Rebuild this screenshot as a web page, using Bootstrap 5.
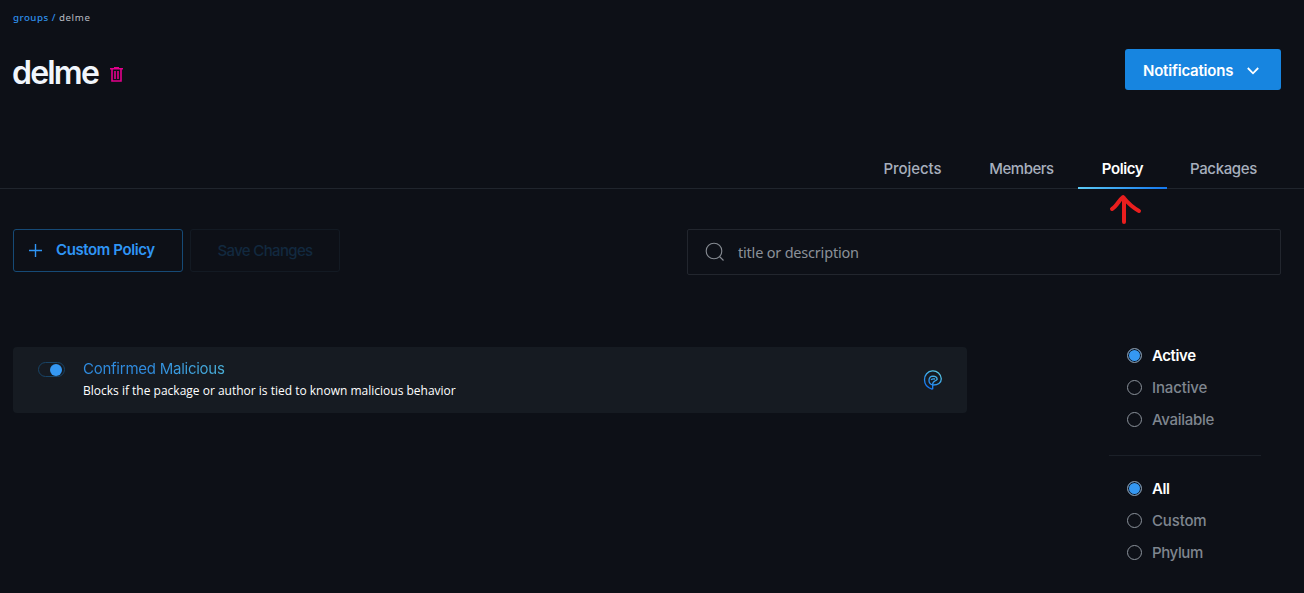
<!DOCTYPE html>
<html lang="en" data-bs-theme="dark">
<head>
<meta charset="utf-8">
<meta name="viewport" content="width=device-width, initial-scale=1">
<title>delme – Policy</title>
<link href="https://cdn.jsdelivr.net/npm/bootstrap@5.3.0/dist/css/bootstrap.min.css" rel="stylesheet">
<style>
:root{--ui:Inter,"Liberation Sans",sans-serif;--copy:"Noto Sans","Open Sans",sans-serif}
body{background:#0d1017;font-family:var(--ui);font-size:15px;line-height:20px;color:#fff;height:593px;overflow:hidden}
.crumbs{font:400 9.7px/14px var(--copy);padding:11px 0 0 13px;height:25px;letter-spacing:.6px;color:#b8bcc2}
.crumbs a{color:#2f8fea;font-weight:500;letter-spacing:.5px}
.title-row{height:90px;padding:24px 23px 0 12px}
h1{font-size:32px;line-height:48px;font-weight:600;letter-spacing:-1.8px;width:98px;color:#f1f6fc}
.btn-notify{--bs-btn-bg:#1785e0;--bs-btn-border-width:0;width:156px;height:41px;border-radius:3px;padding:2px 22px 0 18px;font-size:15px;font-weight:600;letter-spacing:-.2px}
.btn-notify span{padding-top:1px}
.tabs{height:74px;border-bottom:1px solid #20252d;padding:34px 24px 0 0}
.tabs a{height:40px;padding:10px 0;color:#a7afbd;font-weight:500;font-size:15px;text-align:center;letter-spacing:-.35px}
.tabs a.active{color:#fff;font-weight:600;letter-spacing:-.4px;position:relative}
.tabs a.active::after{content:"";position:absolute;left:0;right:0;bottom:0;height:2px;background:linear-gradient(90deg,#5ccaf5,#1477ee)}
.pointer{position:absolute;left:30px;top:45px;z-index:1}
.tools{padding:40px 23px 0 13px;height:158px}
.btn-policy{width:170px;height:43px;border:1px solid #164a76;border-radius:3px;padding:0 0 1px 15px;color:#2f95f5;font-weight:600;font-size:15px;letter-spacing:-.4px}
.btn-policy svg{margin-right:14px}
.btn-save{width:150px;height:43px;border:1px solid #131a23;border-radius:3px;color:#12293f;font-weight:500;font-size:15px;letter-spacing:-.65px;padding:0}
.search{width:594px;height:46px;border:1px solid #22262e;border-radius:2px;padding-left:17px}
.search input{background:none;border:0;padding:0;color:#8b9099;font:14.5px/20px var(--copy);letter-spacing:-.2px;outline:0}
.search input::placeholder{color:#8b9099;opacity:1}
.rule{width:954px;height:66px;background:#161b22;border-radius:4px;margin-left:13px;padding:0 24px 0 25px}
.switch{width:27px;height:15px;border:1px solid #194466;border-radius:8px;padding:0 2px;margin-bottom:21px}
.switch i{width:12px;height:12px;border-radius:50%;background:#3598f2}
.rule h2{font-size:15px;line-height:20px;font-weight:400;letter-spacing:-.25px;width:144px;background:linear-gradient(90deg,#2f8ce0 45%,#4bb4dc);-webkit-background-clip:text;color:transparent;white-space:nowrap;margin-bottom:3px}
.rule p{font:12px/18px "Open Sans",sans-serif;white-space:nowrap;padding-bottom:1px}
.filters{width:152px;margin-left:142px}
.filters label{height:32px;padding-left:18px;gap:10px;color:#7f868f;font-weight:500;letter-spacing:-.15px}
.filters label span{padding-top:1px}
.filters input{appearance:none;width:15px;height:15px;border:1px solid #8b929b;border-radius:50%;margin:0}
.filters input:checked{background:#3598f2;box-shadow:inset 0 0 0 1px #0d1017}
.filters label:has(:checked){color:#fff;font-weight:600;letter-spacing:-.4px}
.filters hr{margin:20px 0 16px;border-color:#1b2028;opacity:1}
</style>
</head>
<body>
<nav class="crumbs"><a class="text-decoration-none" href="#">groups /</a> <span>delme</span></nav>
<header class="title-row d-flex justify-content-between align-items-start">
  <div class="d-flex">
    <h1 class="m-0">delme</h1>
    <svg width="14" height="16" viewBox="0 0 14 16" fill="none" stroke="#e3008c" stroke-width="1.6" style="margin-top:18px"><path d="M0 1.800h13M2 2v12h9V2M4 .8h5M5 4v8M8 4v8"/></svg>
  </div>
  <button class="btn btn-primary btn-notify d-flex align-items-center justify-content-between"><span>Notifications</span>
    <svg width="12" height="8" viewBox="0 0 12 8" fill="none" stroke="#fff" stroke-width="1.8"><path d="M.8 1 6 6.3 11.2 1"/></svg></button>
</header>
<nav class="tabs d-flex justify-content-end">
  <a class="text-decoration-none" style="width:112px" href="#"><span style="letter-spacing:-.05px;padding-left:1px">Projects</span></a>
  <a class="text-decoration-none" style="width:107px" href="#"><span style="letter-spacing:-.5px">Members</span></a>
  <a class="active text-decoration-none" style="width:89px;margin-left:3px" href="#"><span>Policy</span>
    <svg class="pointer" width="34" height="32" viewBox="0 0 34 32" fill="none" stroke="#e91e1e" stroke-width="4" stroke-linecap="round" stroke-linejoin="round"><path d="M4 15C9 12 11 6 15 3c4 5 7 9 16 14M16 4v24"/></svg></a>
  <a class="text-decoration-none" style="width:113px" href="#"><span>Packages</span></a>
</nav>
<section class="tools d-flex align-items-start">
  <button class="btn btn-policy d-flex align-items-center"><svg width="13" height="13" viewBox="0 0 13 13" stroke="#2f95f5" stroke-width="1.4"><path d="M0 6.500h13M6.500 0v13"/></svg><span>Custom Policy</span></button>
  <div class="btn-save d-flex align-items-center justify-content-center" style="margin-left:7px"><span>Save Changes</span></div>
  <div class="search d-flex align-items-center ms-auto">
    <svg width="20" height="20" viewBox="0 0 20 20" fill="none" stroke="#868b92" stroke-width="1.1" style="margin-right:13px"><circle cx="9" cy="9" r="7.800"/><path d="m14.500 14.500 4 4"/></svg>
    <input class="flex-grow-1" placeholder="title or description">
  </div>
</section>
<main class="d-flex align-items-start">
  <article class="rule d-flex align-items-center">
    <span class="switch d-flex align-items-center justify-content-end"><i></i></span>
    <div style="margin-left:18px"><h2>Confirmed Malicious</h2><p class="m-0">Blocks if the package or author is tied to known malicious behavior</p></div>
    <svg class="ms-auto" width="20" height="20" viewBox="0 0 20 20" fill="none" stroke="url(#g)" stroke-width="1.300"><defs><linearGradient id="g" x1="0" y1="1" x2=".6" y2="0"><stop stop-color="#0868f5"/><stop offset="1" stop-color="#55c5e5"/></linearGradient></defs><path d="M9.500 19.300C4.500 18 1.500 14.500 1.500 9.800A8.400 8.400 0 0 1 18.300 8.800C18.300 13 15 15.200 9.700 15V19.300M9.500 15C4.500 13.500 5 6.300 10 6.100c2.500 0 4 1.500 4.200 3.200-1 2-4.500 1-4.700 5.500M8 9.700c1.500-1.200 2.800-1 4-.7"/></svg>
  </article>
  <aside class="filters" style="margin-top:-8px">
    <label class="d-flex align-items-center"><input type="radio" name="status" checked><span>Active</span></label>
    <label class="d-flex align-items-center"><input type="radio" name="status"><span>Inactive</span></label>
    <label class="d-flex align-items-center"><input type="radio" name="status"><span style="letter-spacing:-.3px">Available</span></label>
    <hr>
    <label class="d-flex align-items-center"><input type="radio" name="kind" checked><span>All</span></label>
    <label class="d-flex align-items-center"><input type="radio" name="kind"><span>Custom</span></label>
    <label class="d-flex align-items-center"><input type="radio" name="kind"><span style="letter-spacing:-.4px">Phylum</span></label>
  </aside>
</main>
<script src="https://cdn.jsdelivr.net/npm/bootstrap@5.3.0/dist/js/bootstrap.bundle.min.js"></script>
</body>
</html>
